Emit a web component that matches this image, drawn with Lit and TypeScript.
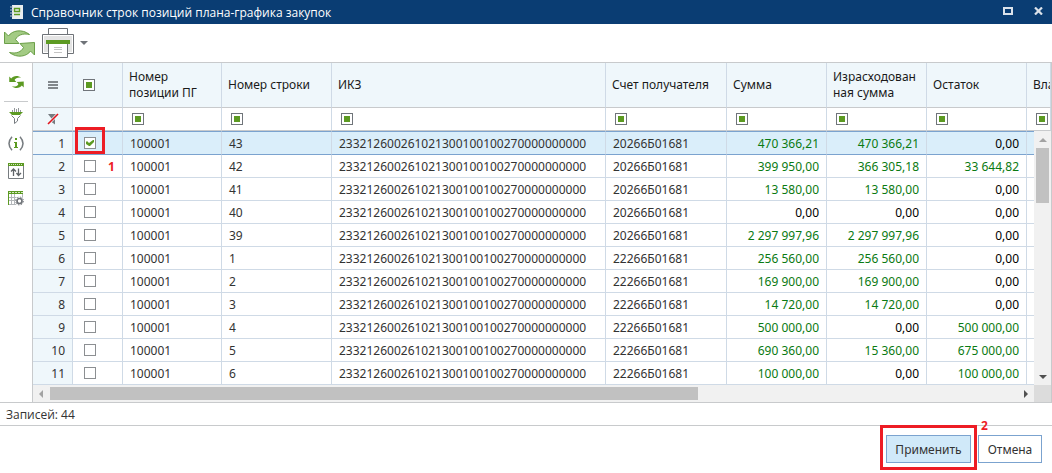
import { LitElement, html, css, svg } from "lit";
import { customElement, property } from "lit/decorators.js";

interface Row {
  position: string;
  line: string;
  ikz: string;
  account: string;
  sum: string;
  spent: string;
  rest: string;
}

const IKZ = "233212600261021300100100270000000000";

const row = (line: string, account: string, sum: string, spent: string, rest: string): Row => ({
  position: "100001",
  line,
  ikz: IKZ,
  account,
  sum,
  spent,
  rest,
});

const ROWS: Row[] = [
  row("43", "20266Б01681", "470 366,21", "470 366,21", "0,00"),
  row("42", "20266Б01681", "399 950,00", "366 305,18", "33 644,82"),
  row("41", "20266Б01681", "13 580,00", "13 580,00", "0,00"),
  row("40", "20266Б01681", "0,00", "0,00", "0,00"),
  row("39", "20266Б01681", "2 297 997,96", "2 297 997,96", "0,00"),
  row("1", "22266Б01681", "256 560,00", "256 560,00", "0,00"),
  row("2", "22266Б01681", "169 900,00", "169 900,00", "0,00"),
  row("3", "22266Б01681", "14 720,00", "14 720,00", "0,00"),
  row("4", "22266Б01681", "500 000,00", "0,00", "500 000,00"),
  row("5", "22266Б01681", "690 360,00", "15 360,00", "675 000,00"),
  row("6", "22266Б01681", "100 000,00", "0,00", "100 000,00"),
];

const COLUMNS = ["Номер позиции ПГ", "Номер строки", "ИКЗ", "Счет получателя", "Сумма", "Израсходованная сумма", "Остаток", "Вла"];

@customElement("data-grid")
export class DataGrid extends LitElement {
  @property({ attribute: false }) rows: Row[] = [];

  static styles = css`
    :host {
      display: block;
      flex: 1;
      min-width: 0;
      border-left: 1px solid #c8cacc;
      border-right: 1px solid #c8cacc;
    }
    .viewport {
      position: relative;
      overflow: hidden;
    }
    table {
      width: 100%;
      table-layout: fixed;
      border-collapse: separate;
      border-spacing: 0;
    }
    .c-num { width: 40px; }
    .c-check { width: 50px; }
    .c-pos { width: 99px; }
    .c-line { width: 110px; }
    .c-ikz { width: 274px; }
    .c-acc { width: 121px; }
    .c-sum { width: 100px; }
    th, td {
      box-sizing: border-box;
      padding: 0 7px;
      height: 23px;
      line-height: 16px;
      font-weight: normal;
      text-align: left;
      white-space: nowrap;
      overflow: hidden;
      border-right: 1px solid #cfdae6;
      border-bottom: 1px solid #cfdae6;
      color: #333;
    }
    tbody th, tbody td { padding-top: 2px; }
    thead th, thead td { border-bottom-color: #c8cacc; }
    thead th {
      height: 45px;
      padding: 0 6px;
      background: #eff7fb;
      color: #1a1a1a;
      white-space: normal;
      word-break: break-word;
    }
    thead .clip { white-space: nowrap; padding-right: 0; }
    thead .menu, thead .reset { text-align: center; }
    tbody th, thead .reset { background: #eff7fb; }
    tbody th { text-align: right; }
    .num { text-align: right; color: #0a7a12; }
    .num.zero { color: #000; }
    thead .tick { padding: 0 10px; }
    tbody .tick { padding: 0 11px; }
    tbody .selected td, tbody .selected th {
      height: 24px;
      border-top: 1px solid #7ba3cf;
      border-bottom-color: #7ba3cf;
    }
    tbody .selected td { background: #daeefa; }
    button {
      display: block;
      padding: 0;
      border: 0;
      background: none;
    }
    .box, input {
      appearance: none;
      display: block;
      box-sizing: border-box;
      width: 12px;
      height: 12px;
      margin: 0;
      padding: 2px;
      border: 1px solid #8c8f92;
      background: #fff;
    }
    .box { border-color: #70757a; }
    .filter { margin-left: 2px; }
    .box::before {
      content: "";
      display: block;
      width: 6px;
      height: 6px;
      background: #5c9a22;
    }
    input:checked { padding: 1px; }
    input:checked::before {
      content: "";
      display: block;
      width: 8px;
      height: 8px;
      background: #5c9a22;
      clip-path: polygon(0 3px, 1px 2px, 3px 4px, 7px 1px, 8px 1px, 8px 3px, 4px 7px, 3px 7px, 0 5px);
    }
    svg { display: block; margin: 0 auto; }
    .vbar {
      position: absolute;
      top: 68px;
      right: 0;
      bottom: 0;
      width: 17px;
      box-sizing: border-box;
      display: flex;
      flex-direction: column;
      align-items: center;
      padding: 6px 2px;
      background: #f1f1f1;
    }
    .up, .down, .left, .right {
      width: 0;
      height: 0;
      border: 4px solid transparent;
    }
    .up { border-top: 0; border-bottom-color: #a3a3a3; margin: 1px 0 6px; }
    .down { border-bottom: 0; border-top-color: #505050; margin-top: auto; }
    .left { border-left: 0; border-right-color: #a3a3a3; }
    .right { border-right: 0; border-left-color: #505050; margin-left: auto; }
    .vthumb {
      width: 13px;
      height: 55px;
      background: #c1c1c1;
    }
    .hbar {
      display: flex;
      align-items: center;
      height: 17px;
      background: linear-gradient(#dcdcdc, #dcdcdc) right / 17px 100% no-repeat #f1f1f1;
      padding: 0 23px 0 6px;
      box-sizing: border-box;
    }
    .hthumb {
      width: 65.5%;
      height: 13px;
      margin-left: 7px;
      background: #c1c1c1;
    }
  `;

  private amount(value: string) {
    return html`<td class="num ${value === "0,00" ? "zero" : ""}">${value}</td>`;
  }

  render() {
    return html`
      <div class="viewport">
        <table>
          <colgroup>
            <col class="c-num" /><col class="c-check" /><col class="c-pos" /><col class="c-line" />
            <col class="c-ikz" /><col class="c-acc" /><col class="c-sum" /><col class="c-sum" />
            <col class="c-sum" /><col />
          </colgroup>
          <thead>
            <tr>
              <th class="menu">
                <svg width="10" height="8" viewBox="0 0 10 8"><path d="M0 1h10M0 4h10M0 7h10" stroke="#5f6468" stroke-width="1.6" /></svg>
              </th>
              <th class="tick"><button class="box" aria-label="Отметить все"></button></th>
              ${COLUMNS.map((c, i) => html`<th class=${i === COLUMNS.length - 1 ? "clip" : ""}>${c}</th>`)}
            </tr>
            <tr>
              <td class="reset">
                <svg width="12" height="12" viewBox="0 0 12 12">
                  <path d="M1 1h10L8 5.500V11.500L4.500 9V5.500Z" fill="#777c80" />
                  <path d="M1 11L11 1" stroke="#eff7fb" stroke-width="3" />
                  <path d="M1 11L11 1" stroke="#e0141c" stroke-width="1.600" />
                </svg>
              </td>
              <td></td>
              ${COLUMNS.map((c) => html`<td><button class="box filter" aria-label="Фильтр: ${c}"></button></td>`)}
            </tr>
          </thead>
          <tbody>
            ${this.rows.map(
              (r, i) => html`
                <tr class=${i === 0 ? "selected" : ""}>
                  <th scope="row">${i + 1}</th>
                  <td class="tick"><input type="checkbox" aria-label="Строка ${i + 1}" ?checked=${i === 0} /></td>
                  <td>${r.position}</td>
                  <td>${r.line}</td>
                  <td>${r.ikz}</td>
                  <td>${r.account}</td>
                  ${this.amount(r.sum)}${this.amount(r.spent)}${this.amount(r.rest)}
                  <td></td>
                </tr>
              `,
            )}
          </tbody>
        </table>
        <div class="vbar"><i class="up"></i><i class="vthumb"></i><i class="down"></i></div>
      </div>
      <div class="hbar"><i class="left"></i><i class="hthumb"></i><i class="right"></i></div>
    `;
  }
}

const refreshShape = svg`
  <path d="M0.500 3L4.500 7C8 1.500 18 -0.500 25.500 5.500C19 4 13.500 6 11.500 10.500L15 14.500H0.500Z" />
  <path d="M30.500 26L26.500 22C23 27.500 13 29.500 5.500 23.500C12 25 17.500 23 19.500 18.500L16 14.500L30.500 13.500Z" />
`;

@customElement("app-root")
export class AppRoot extends LitElement {
  static styles = css`
    :host {
      display: block;
      background: #fff;
      font-family: "Noto Sans", "Open Sans", sans-serif;
      font-size: 12px;
      color: #333;
    }
    .dialog { display: flex; flex-direction: column; }
    header {
      display: flex;
      align-items: center;
      height: 24px;
      padding: 0 9px 0 10px;
      background: #0a3d73;
      color: #fff;
    }
    h1 {
      flex: 1;
      margin: 0 0 0 8px;
      padding-top: 2px;
      font-family: "Open Sans", "Noto Sans", sans-serif;
      font-size: 12px;
      font-weight: normal;
      line-height: 16px;
    }
    .controls { display: flex; align-items: center; gap: 21px; padding-bottom: 2px; }
    button {
      display: block;
      padding: 0;
      border: 0;
      background: none;
      font: inherit;
      color: inherit;
    }
    svg { display: block; }
    .toolbar {
      display: flex;
      align-items: center;
      gap: 7px;
      height: 38px;
      padding: 0 4px;
      border-bottom: 1px solid #c8cacc;
    }
    .print { display: flex; align-items: center; gap: 6px; }
    .main { display: flex; border-bottom: 1px solid #c8cacc; }
    nav {
      width: 32px;
      box-sizing: border-box;
      padding: 12px 4px 0;
    }
    .tools { display: grid; justify-items: center; gap: 12px; padding-top: 6px; }
    .first {
      display: grid;
      justify-items: center;
      padding-bottom: 12px;
      border-bottom: 1px solid #c8cacc;
    }
    .status {
      height: 22px;
      line-height: 24px;
      padding: 0 6px;
      font-family: "Open Sans", "Noto Sans", sans-serif;
      border-bottom: 1px solid #c8cacc;
    }
    footer {
      display: flex;
      justify-content: flex-end;
      gap: 7px;
      padding: 9px 10px;
    }
    .action {
      box-sizing: border-box;
      height: 28px;
      width: 64px;
      border: 1px solid #7ba3cf;
      background: #fff;
      font-size: 12px;
    }
    .primary { background: #d0e9f9; width: 85px; }
    .anchor { position: relative; }
    .mark {
      position: absolute;
      box-sizing: border-box;
      border: 3px solid #ed1c24;
      pointer-events: none;
    }
    .mark-apply { top: -10px; left: -6px; width: 97px; height: 45px; }
    .mark-check { top: 64px; left: 75px; width: 30px; height: 27px; }
    .note {
      position: absolute;
      font-weight: bold;
      line-height: 16px;
      color: #ed1c24;
    }
    .note-1 { top: 96px; left: 108px; }
    .note-2 { top: -17px; left: 95px; }
  `;

  render() {
    return html`
      <div class="dialog">
        <header>
          <svg width="13" height="14" viewBox="0 0 13 14">
            <path d="M2 0h11v14H2z" fill="#e9edf0" />
            <path d="M0 2h3M0 5h3M0 8h3M0 11h3" stroke="#b8c4d0" />
            <path d="M4.500 3.500h5v3h-5zM4 9.500h6" fill="none" stroke="#5c9a22" stroke-width="1.400" />
          </svg>
          <h1>Справочник строк позиций плана-графика закупок</h1>
          <div class="controls">
            <button aria-label="Развернуть"><svg width="10" height="8" viewBox="0 0 10 8"><path d="M1 1h8v6H1z" fill="none" stroke="#dbe2ea" stroke-width="2" /></svg></button>
            <button aria-label="Закрыть"><svg width="9" height="8" viewBox="0 0 9 8"><path d="M1 0.500L8 7.500M8 0.500L1 7.500" stroke="#dbe2ea" stroke-width="2.200" /></svg></button>
          </div>
        </header>
        <div class="toolbar">
          <button aria-label="Обновить">
            <svg width="31" height="29" viewBox="0 0 31 29" fill="#a3cb84" stroke="#6b9f48">${refreshShape}</svg>
          </button>
          <button class="print" aria-label="Печать">
            <svg width="32" height="30" viewBox="0 0 32 30">
              <path d="M6.500 6.500v-6h19v6" fill="#fff" stroke="#6f7378" />
              <path d="M0.500 6.500h31v19h-31z" fill="#fff" stroke="#6f7378" />
              <path d="M2 8h28v16H2z" fill="#e4e4e4" />
              <path d="M6.500 15.500h19v14h-19z" fill="#fff" stroke="#6f7378" />
              <path d="M4 12h24v4H4z" fill="#5c9a22" />
              <path d="M12 19.500h8M12 21.500h8M12 24.500h8" stroke="#c4c4c4" />
            </svg>
            <svg width="8" height="4" viewBox="0 0 8 4"><path d="M0 0h8L4 4z" fill="#6f7378" /></svg>
          </button>
        </div>
        <div class="main anchor">
          <nav>
            <div class="first">
              <button aria-label="Обновить"><svg width="15" height="14" viewBox="0 0 31 29" fill="#5c9a22">${refreshShape}</svg></button>
            </div>
            <div class="tools">
              <button aria-label="Фильтр">
                <svg width="14" height="16" viewBox="0 0 14 16">
                  <path d="M3.500 2v2M5.500 0v4M7.500 1v3M9.500 0v4M11.500 2v2" stroke="#777c80" stroke-width="0.800" />
                  <path d="M0 4h14L11 7H3z" fill="#5c9a22" />
                  <path d="M2.500 7.500L5.500 10.500V15.500L8.500 13V10.500L11.500 7.500" fill="none" stroke="#777c80" />
                </svg>
              </button>
              <button aria-label="Информация">
                <svg width="16" height="15" viewBox="0 0 16 15">
                  <path d="M4 0.700Q-2 7.500 4 14.300M12 0.700Q18 7.500 12 14.300" fill="none" stroke="#777c80" stroke-width="1.500" />
                  <path d="M7 2h2v2H7zM6 6h3v5h1v1H6v-1h1V7H6z" fill="#5c9a22" />
                </svg>
              </button>
              <button aria-label="Сортировка">
                <svg width="16" height="16" viewBox="0 0 16 16">
                  <path d="M0.500 3v12.500h15V3" fill="none" stroke="#777c80" />
                  <path d="M0 0h16v3H0z" fill="#5c9a22" />
                  <path d="M1 1.500h14" stroke="#d5e8c4" stroke-dasharray="1 1" />
                  <path d="M5.500 13V6M3 8.500L5.500 6L8 8.500M10.500 5.500v7M8.500 10L10.500 12.500L13 10" fill="none" stroke="#5f6468" stroke-width="1.300" />
                </svg>
              </button>
              <button aria-label="Настройка таблицы">
                <svg width="16" height="15" viewBox="0 0 16 15">
                  <path d="M0.500 3v10.500h8M3.500 3v10M6.500 3v10M0 6.500h14M0 9.500h8M14.500 3v4" fill="none" stroke="#b3b7ba" />
                  <path d="M0 0h15v3H0zM0 3h1v11H0z" fill="#5c9a22" />
                  <path d="M1 1.500h14" stroke="#d5e8c4" stroke-dasharray="2 1" />
                  <circle cx="11.500" cy="10" r="4.500" fill="#fff" />
                  <circle cx="11.500" cy="10" r="2.500" fill="none" stroke="#6f7378" stroke-width="1.700" />
                  <circle cx="11.500" cy="10" r="3.900" fill="none" stroke="#6f7378" stroke-dasharray="1.500 1.560" />
                </svg>
              </button>
            </div>
          </nav>
          <data-grid .rows=${ROWS}></data-grid>
          <span class="mark mark-check"></span>
          <span class="note note-1">1</span>
        </div>
        <div class="status">Записей: 44</div>
        <footer>
          <div class="anchor">
            <button class="action primary">Применить</button>
            <span class="mark mark-apply"></span>
            <span class="note note-2">2</span>
          </div>
          <button class="action">Отмена</button>
        </footer>
      </div>
    `;
  }
}
